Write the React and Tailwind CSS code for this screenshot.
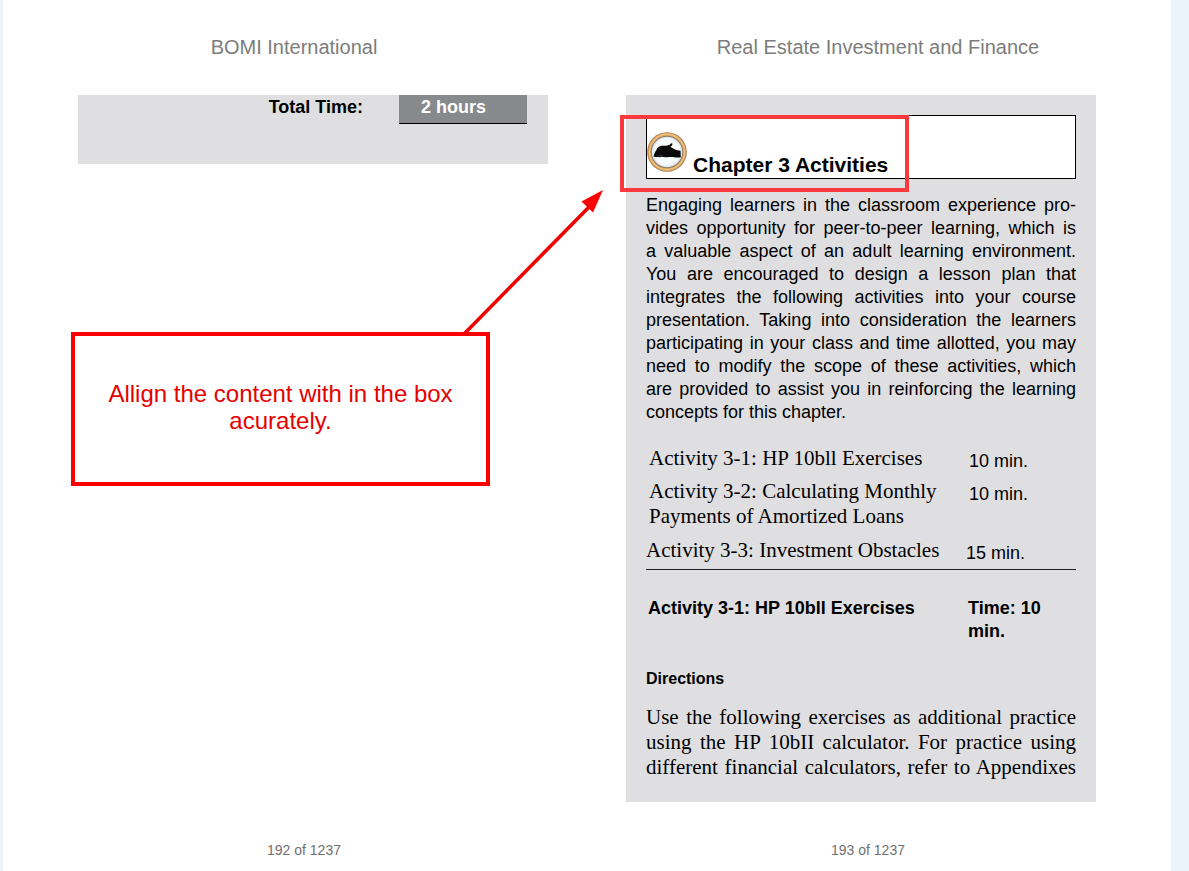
import React from "react";

const SANS = "font-['Liberation_Sans',Arial,sans-serif]";
const SERIF = "font-['Liberation_Serif','Times_New_Roman',serif]";

const activities = [
  { name: "Activity 3-1: HP 10bll Exercises", time: "10 min.", inset: "pl-[3px]", gap: "pb-2" },
  { name: "Activity 3-2: Calculating Monthly Payments of Amortized Loans", time: "10 min.", inset: "pl-[3px]", gap: "pb-[9px]" },
  { name: "Activity 3-3: Investment Obstacles", time: "15 min.", inset: "pl-0", gap: "pb-1.5" },
];

function WritingHandIcon() {
  return (
    <svg viewBox="0 0 40 40" className="size-10 shrink-0" aria-hidden="true">
      <defs>
        <radialGradient id="disc">
          <stop offset="0" stopColor="#ffffff" />
          <stop offset="0.85" stopColor="#f4f8fa" />
          <stop offset="1" stopColor="#d5e0e7" />
        </radialGradient>
      </defs>
      <circle cx="20" cy="20" r="19.8" fill="#a07c4e" />
      <circle cx="20" cy="20" r="18.9" fill="#dfaa62" />
      <circle cx="20" cy="20" r="17.6" fill="none" stroke="#efc283" strokeWidth="1.2" />
      <circle cx="20" cy="20" r="16.2" fill="#8b7860" />
      <circle cx="20" cy="20" r="15.3" fill="url(#disc)" />
      <path
        d="M6.6 24.8 C6.8 22.4 7.8 20.2 9.2 18.2 C10.2 16.2 11.4 14.6 13.2 14 C15.4 13.3 18 13.9 20.2 13.4 L22.6 12.8 L24.2 11.2 L25.5 11.6 L25.1 13.4 L23.4 14.8 C25 15.6 26.4 16.8 28.2 17.6 C29.8 18.3 31.2 18.5 33.6 18.7 L33.8 25.4 C31 25.8 29 25.6 27.2 25.2 C24.6 25 22.6 25 20.6 25.2 C19 25.5 17.6 25.3 16.4 25 L14.8 24.8 L13.2 25.3 Z"
        fill="#0b0b0c"
      />
      <path d="M9.8 24.4 L14.4 22.6 L15.4 23.2 L13.4 24.6 Z" fill="#303335" />
    </svg>
  );
}

function Callout() {
  return (
    <aside className="relative mt-[168px] -ml-[7px] flex h-[154px] w-[419px] max-w-full items-center justify-center border-4 border-[#fb0000] px-6 pb-1 text-center">
      <p className="text-[24px] leading-[27px] text-[#e60000]">
        Allign the content with in the box acurately.
      </p>
      <svg
        viewBox="0 0 142 146"
        className="absolute -top-[148px] left-[388px] h-[146px] w-[142px]"
        aria-hidden="true"
      >
        <path d="M1 146 L126 19" stroke="#f20000" strokeWidth="3.6" fill="none" />
        <path d="M140 2 L118.5 13.5 L130 24.5 Z" fill="#fb0000" />
      </svg>
    </aside>
  );
}

export default function App() {
  return (
    <div className={`min-h-screen bg-[#ebf3fb] pr-[18px] pl-[3px] text-black ${SANS}`}>
      <main className="grid min-h-screen grid-cols-2 gap-[78px] bg-white px-[75px]">
        <article className="flex flex-col">
          <header className="flex h-[95px] items-center justify-center pr-[38px] pb-0.5 text-[20px] text-[#7c7c7c]">
            BOMI International
          </header>
          <section className="flex h-[69px] items-start justify-end bg-[#dfdfe1] pr-[21px] font-bold">
            <span className="pr-9 text-[18px] leading-6">Total Time:</span>
            <span className="h-[29px] w-32 border-b border-black bg-[#88898d] pl-[22px] text-[18px] leading-6 text-white">
              2 hours
            </span>
          </section>
          <Callout />
          <footer className="mt-auto flex h-[42px] items-center justify-center pr-[18px] text-[14px] text-[#707070]">
            192 of 1237
          </footer>
        </article>

        <article className="flex flex-col">
          <header className="flex h-[95px] items-center justify-center pb-0.5 pl-[34px] text-[20px] text-[#7c7c7c]">
            Real Estate Investment and Finance
          </header>
          <section className="bg-[#dfdfe1] px-5 pt-5 pb-[22px]">
            <div className="relative flex h-16 items-end border border-black bg-white pb-1.5">
              <WritingHandIcon />
              <h1 className="-mb-1 pl-1.5 text-[21px] leading-[22px] font-bold">Chapter 3 Activities</h1>
              <div className="absolute -top-px -left-[27px] h-[77px] w-[289px] border-4 border-[#f93a3c]" />
            </div>
            <p className="pt-[15px] text-justify text-[18px] leading-[23px]">
              Engaging learners in the classroom experience pro&shy;vides opportunity for peer-to-peer
              learning, which is a&nbsp;valuable aspect of an adult learning environment.
              You&nbsp;are encouraged to design a lesson plan that integrates the following activities
              into your course presentation. Taking into consideration the learners participating in
              your class and time allotted, you may need to modify the scope of these activities, which
              are provided to assist you in reinforcing the learning concepts for this chapter.
            </p>
            <table className="mt-[22px] w-full border-b border-[#222] text-left leading-[25px]">
              <tbody>
                {activities.map((a) => (
                  <tr key={a.name} className="align-top">
                    <td className={`${a.inset} ${a.gap} ${SERIF} text-[21px]`}>{a.name}</td>
                    <td className={`${a.inset} w-[110px] pt-[3px] text-[18px]`}>{a.time}</td>
                  </tr>
                ))}
              </tbody>
            </table>
            <div className="flex justify-between pt-[27px] pl-0.5 text-[18px] leading-[23px] font-bold">
              <h2>Activity 3-1: HP 10bll Exercises</h2>
              <p className="w-[108px] pr-4">Time: 10 min.</p>
            </div>
            <h3 className="pt-6 text-[16px] leading-6 font-bold">Directions</h3>
            <p className={`pt-[14px] text-justify text-[21px] leading-[25px] [text-align-last:justify] ${SERIF}`}>
              Use the following exercises as additional practice using the HP 10bII calculator. For
              practice using different financial calculators, refer to Appendixes
            </p>
          </section>
          <footer className="mt-auto flex h-[42px] items-center justify-center pl-[14px] text-[14px] text-[#707070]">
            193 of 1237
          </footer>
        </article>
      </main>
    </div>
  );
}
